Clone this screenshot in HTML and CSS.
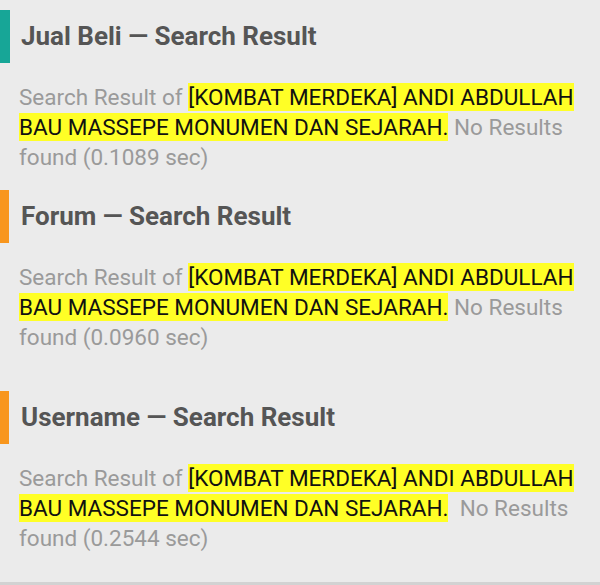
FILE: index.html
```html
<!DOCTYPE html>
<html lang="en">
<head>
    <meta charset="UTF-8">
    <meta name="viewport" content="width=device-width, initial-scale=1.0">
    <title>Search Result</title>
    <link rel="stylesheet" href="styles.css">
</head>
<body>
    <div class="results">
        <div class="section">
            <h2 class="title teal">Jual Beli &mdash; Search Result</h2>
            <p class="info">Search Result of <span class="hl">[KOMBAT MERDEKA] ANDI ABDULLAH BAU MASSEPE MONUMEN DAN SEJARAH.</span> No Results found (0.1089 sec)</p>
        </div>
        <div class="section">
            <h2 class="title orange">Forum &mdash; Search Result</h2>
            <p class="info">Search Result of <span class="hl">[KOMBAT MERDEKA] ANDI ABDULLAH BAU MASSEPE MONUMEN DAN SEJARAH.</span> No Results found (0.0960 sec)</p>
        </div>
        <div class="section last">
            <h2 class="title orange">Username &mdash; Search Result</h2>
            <p class="info">Search Result of <span class="hl">[KOMBAT MERDEKA] ANDI ABDULLAH BAU MASSEPE MONUMEN DAN SEJARAH.</span>&nbsp; No Results found (0.2544 sec)</p>
        </div>
    </div>
</body>
</html>
```

FILE: styles.css
```css
*{
    margin: 0;
    padding: 0;
}
body{
    background: #ebebeb;
    font-family: Roboto, "Liberation Sans", sans-serif;
}
.results{
    height: 582px;
    border-bottom: 3px solid #d2d2d2;
}
.section{
    padding-top: 10px;
    padding-bottom: 8px;
}
.section.last{
    padding-top: 31px;
}
.title{
    font-size: 26px;
    font-weight: bold;
    color: #555;
    line-height: 53px;
    padding-left: 11px;
    border-left: 10px solid #17a697;
}
.title.orange{
    border-left: 9px solid #f8961d;
    padding-left: 12px;
}
.info{
    margin-top: 19px;
    padding: 0 18px 0 19px;
    font-size: 22.5px;
    line-height: 30px;
    color: #9a9a9a;
}
.hl{
    background: #ffff26;
    color: #111;
    padding: 1px 0;
}
```
